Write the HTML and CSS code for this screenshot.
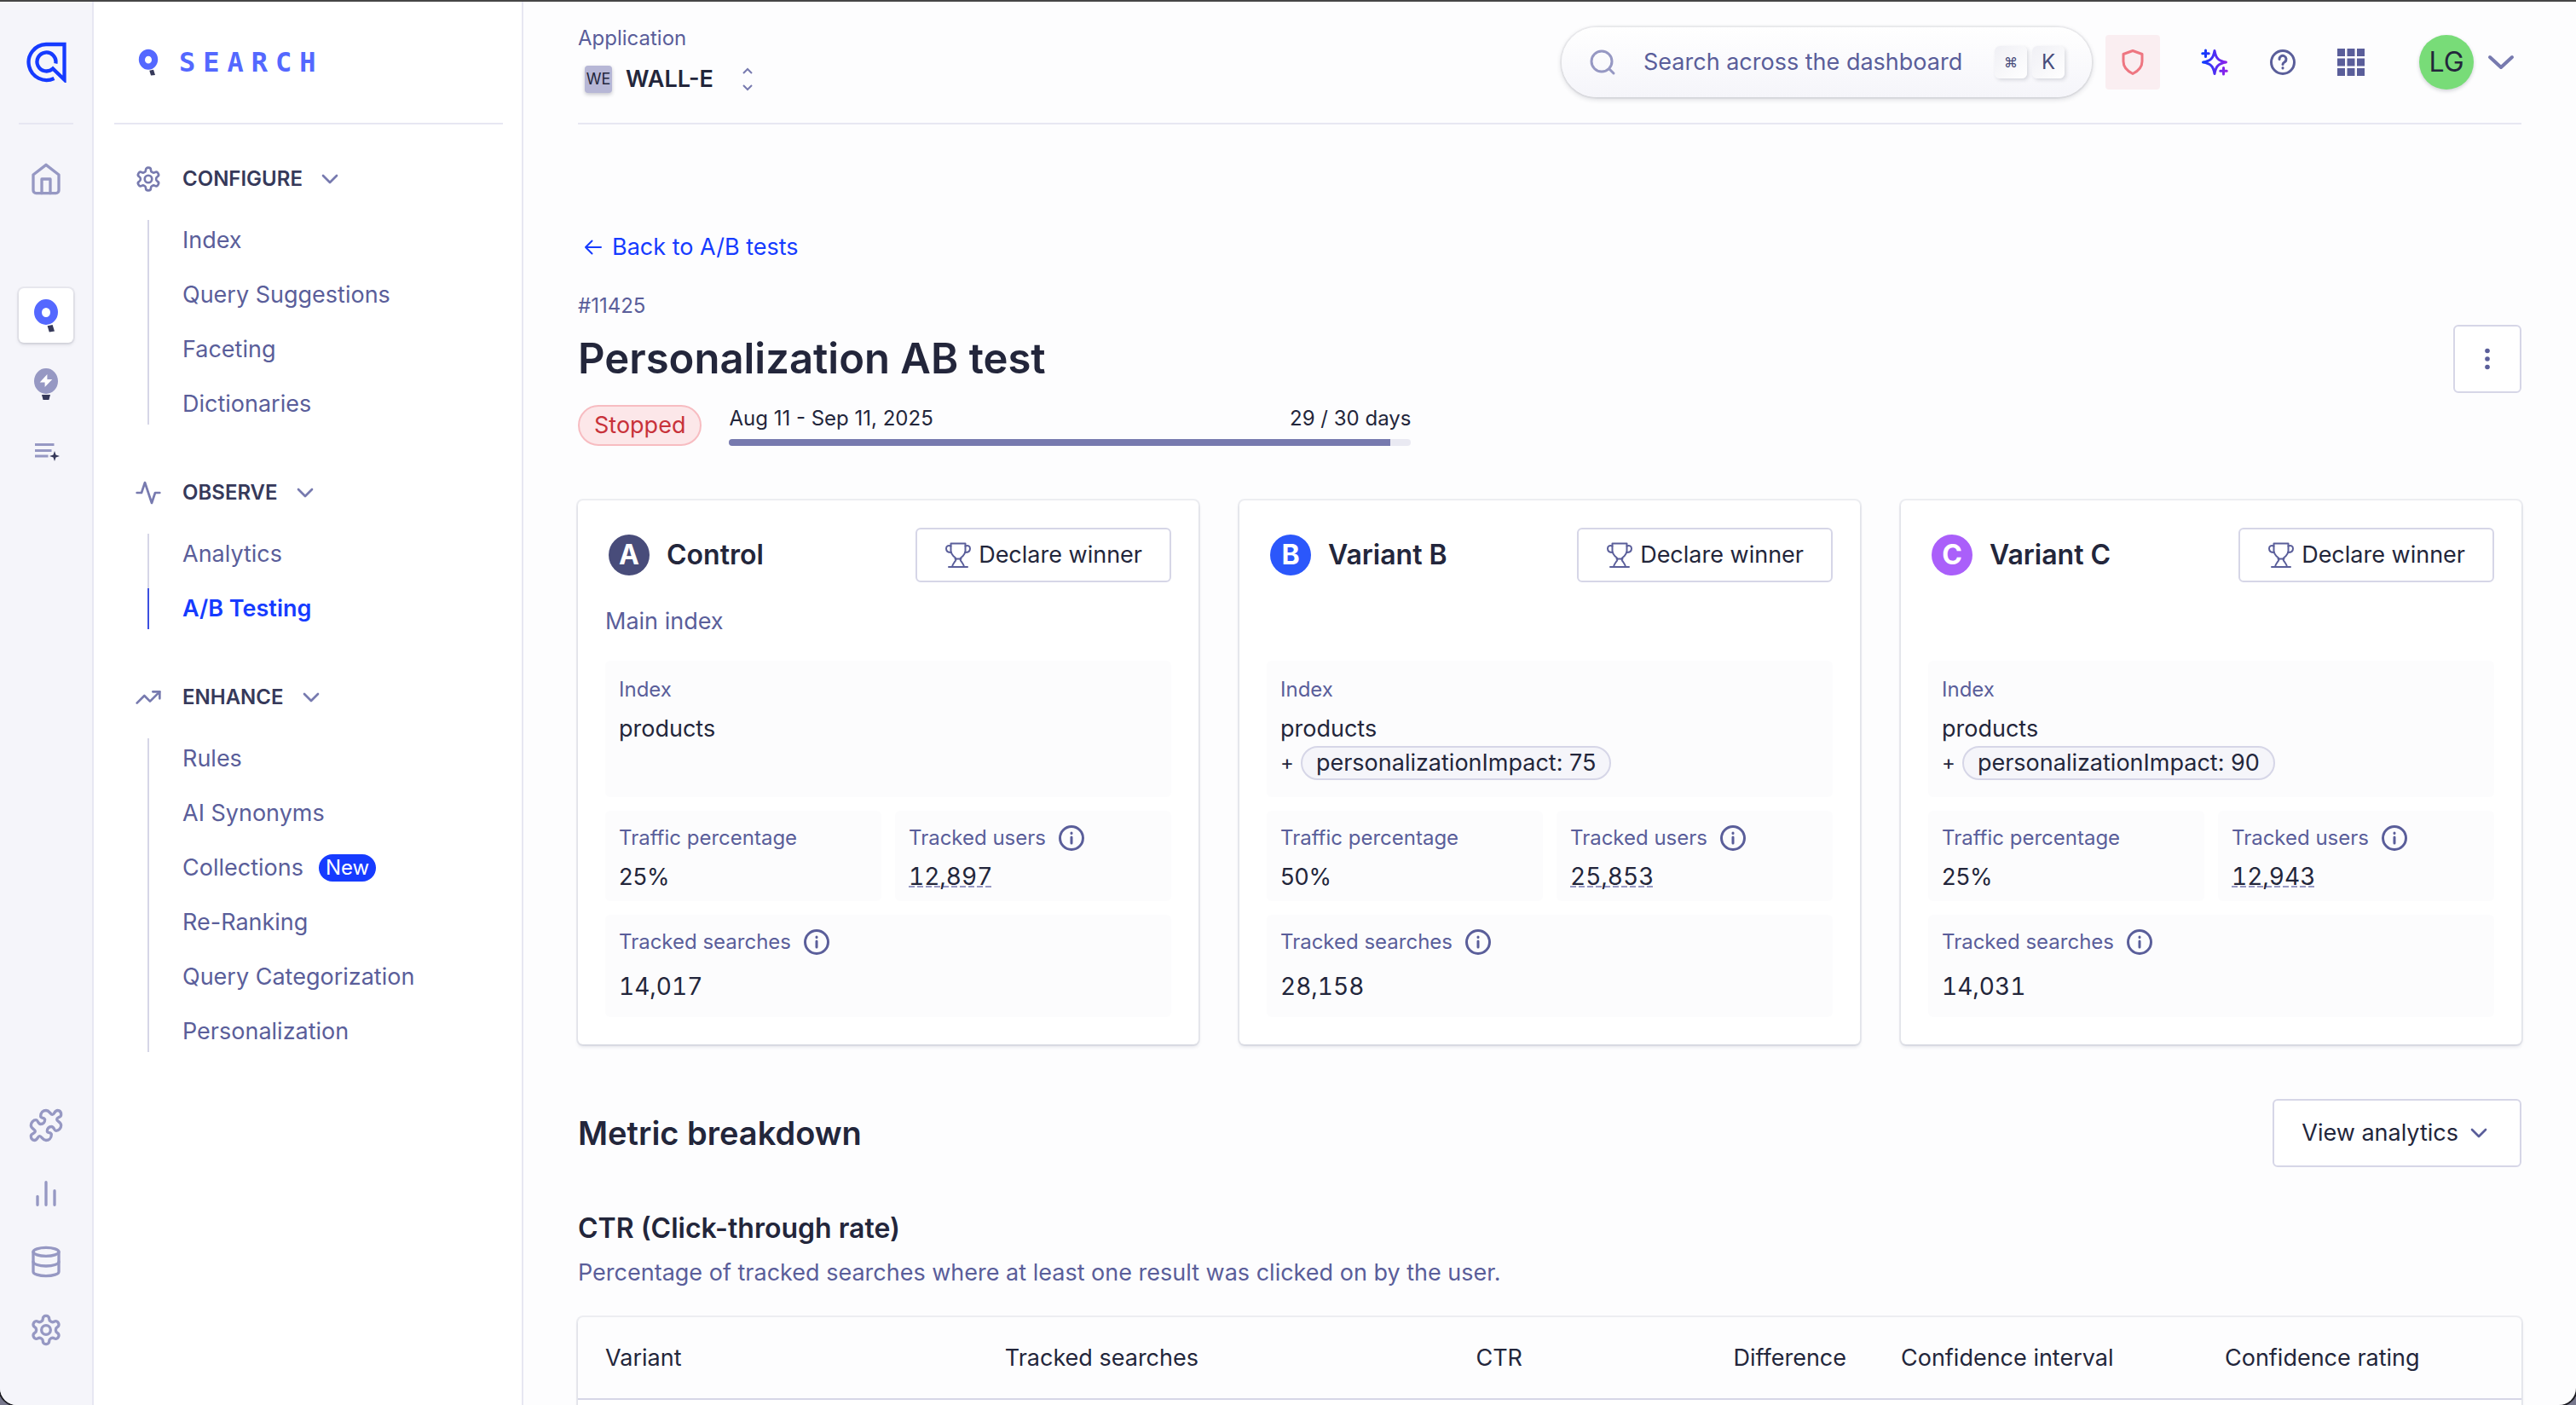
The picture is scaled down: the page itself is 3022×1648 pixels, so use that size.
FILE: index.html
```html
<!DOCTYPE html>
<html lang="en">
<head>
  <meta charset="UTF-8" />
  <meta name="viewport" content="width=device-width, initial-scale=1.0"/>
  <title>Personalization AB test</title>
  <link rel="stylesheet" href="styles.css">
</head>
<body>

<!-- Icons -->
<svg class="sprite" aria-hidden="true">
  <defs>
    <linearGradient id="spark" x1="0" y1="0" x2="32" y2="0" gradientUnits="userSpaceOnUse">
      <stop offset="0" stop-color="#003dff"/>
      <stop offset="1" stop-color="#9a1fe8"/>
    </linearGradient>
  </defs>
  <symbol id="i-gear" viewBox="0 0 24 24">
    <path d="M12.22 2h-.44a2 2 0 0 0-2 2v.18a2 2 0 0 1-1 1.73l-.43.25a2 2 0 0 1-2 0l-.15-.08a2 2 0 0 0-2.73.73l-.22.38a2 2 0 0 0 .73 2.73l.15.1a2 2 0 0 1 1 1.72v.51a2 2 0 0 1-1 1.74l-.15.09a2 2 0 0 0-.73 2.73l.22.38a2 2 0 0 0 2.73.73l.15-.08a2 2 0 0 1 2 0l.43.25a2 2 0 0 1 1 1.73V20a2 2 0 0 0 2 2h.44a2 2 0 0 0 2-2v-.18a2 2 0 0 1 1-1.73l.43-.25a2 2 0 0 1 2 0l.15.08a2 2 0 0 0 2.73-.73l.22-.39a2 2 0 0 0-.73-2.73l-.15-.08a2 2 0 0 1-1-1.74v-.5a2 2 0 0 1 1-1.74l.15-.09a2 2 0 0 0 .73-2.73l-.22-.38a2 2 0 0 0-2.73-.73l-.15.08a2 2 0 0 1-2 0l-.43-.25a2 2 0 0 1-1-1.73V4a2 2 0 0 0-2-2z"/>
    <circle cx="12" cy="12" r="3.2"/>
  </symbol>
  <symbol id="i-home" viewBox="0 0 24 24">
    <path d="M3 9l9-7 9 7v11a2 2 0 0 1-2 2H5a2 2 0 0 1-2-2z"/>
    <path d="M9 22V12h6v10"/>
  </symbol>
  <symbol id="i-puzzle" viewBox="0 0 24 24">
    <path d="M8.2 5.6C8.2 3 10 1.5 12 1.5C14.5 1.5 15 4.4 16.5 4.4C18 4.4 17.8 1.5 20.2 1.5C22 1.5 22.6 3 22.6 4.6C22.6 6.5 19.6 6.2 19.6 7.8C19.6 9.4 22.6 9.6 22.6 12C22.6 14 21 15.8 19 15.8C17.6 15.8 17.8 12.9 15.8 12.9C14 12.9 12.8 14.2 12.8 16C12.8 17.6 15.8 16.8 15.8 18.4C15.8 21 14 22.5 12 22.5C9.5 22.5 9 19.6 7.5 19.6C6 19.6 6.2 22.5 3.8 22.5C2 22.5 1.4 21 1.4 19.4C1.4 17.5 4.4 17.8 4.4 16.2C4.4 14.6 1.4 14.4 1.4 12C1.4 10 3 8.2 5 8.2C6.4 8.2 6.2 11.1 8.2 11.1C10 11.1 11.2 9.8 11.2 8C11.2 6.4 8.2 7.2 8.2 5.6Z"/>
  </symbol>
  <symbol id="i-bars" viewBox="0 0 24 24">
    <path d="M6 14v6M12 4v16M18 10v10"/>
  </symbol>
  <symbol id="i-database" viewBox="0 0 24 24">
    <ellipse cx="12" cy="5" rx="9" ry="3"/>
    <path d="M21 12c0 1.66-4 3-9 3s-9-1.34-9-3"/>
    <path d="M3 5v14c0 1.66 4 3 9 3s9-1.34 9-3V5"/>
  </symbol>
  <symbol id="i-activity" viewBox="0 0 24 24">
    <path d="M22 12h-4l-3 9L9 3l-3 9H2"/>
  </symbol>
  <symbol id="i-trend" viewBox="0 0 24 24">
    <path d="M22 7l-8.5 8.5-5-5L2 17"/>
    <path d="M16 7h6v6"/>
  </symbol>
  <symbol id="i-chevron" viewBox="0 0 24 24">
    <path d="M6 9l6 6 6-6"/>
  </symbol>
  <symbol id="i-query" viewBox="0 0 40 40">
    <path fill="#5468ff" fill-rule="evenodd" d="M20 1a14 15 0 1 1 0 30a14 15 0 1 1 0-30zM20 11a5 5.500 0 1 0 0 11a5 5.500 0 1 0 0-11z"/>
    <path fill="#36395a" d="M21.600 32.200L27.600 31l2.400 7.600-6.200.9z"/>
  </symbol>
  <symbol id="i-trophy" viewBox="0 0 32 32">
    <path d="M7.500 2.500h17v8.500c0 4-2.500 6-5 8-1.500 1.200-1 2.500-.5 3.500 1.500 2.500 3.500 4 4 7.500M7.500 2.500v8.500c0 4 2.500 6 5 8 1.500 1.200 1 2.500.5 3.500-1.500 2.500-3.500 4-4 7.500M5 30h22M12.500 20.500h7"/>
    <path d="M7.500 5.500C4.500 4.300 2 5.500 2 8.500S4.500 13 8 13M24.500 5.500c3-1.200 5.500 0 5.500 3S27.500 13 24 13"/>
  </symbol>
  <symbol id="i-info" viewBox="0 0 32 32">
    <circle cx="16" cy="16" r="13.500"/>
    <path d="M16 15v7M16 10v.5"/>
  </symbol>
</svg>

<div class="app">

  <nav class="rail" aria-label="Products">
    <a class="rail-logo" href="#" aria-label="Home page">
      <svg viewBox="0 0 48 48" width="48" height="48"><path d="M33.500 43A21 21 0 1 1 24 3H45.500V44.500L32 31.500A11 11 0 1 1 35.300 25.500" fill="none" stroke="#163bff" stroke-width="4.300"/></svg>
    </a>
    <a class="rail-item rail-home" href="#" aria-label="Overview"><svg class="icon lg"><use href="#i-home"/></svg></a>
    <a class="rail-item active" href="#" aria-label="Search"><svg class="icon lg glyph"><use href="#i-query"/></svg></a>
    <a class="rail-item" href="#" aria-label="Recommend">
      <svg class="icon lg glyph" viewBox="0 0 40 40">
        <ellipse cx="20" cy="17" rx="14" ry="15" fill="#9698c3"/>
        <path fill="#fff" d="M21.400 9L12.700 18.500h5.900v5.500l8.700-9h-5.900z"/>
        <path fill="#36395a" d="M15 33h10l-1.600 6h-6.800z"/>
      </svg>
    </a>
    <a class="rail-item" href="#" aria-label="Collections">
      <svg class="icon lg glyph" viewBox="0 0 40 40">
        <path stroke="#9698c3" stroke-width="3.200" d="M7 11.500h22.500M7 18.500h19.500M7 25h15.500"/>
        <path fill="#36395a" d="M30 19l1.500 4.500L36 25l-4.500 1.500L30 31l-1.500-4.500L24 25l4.500-1.500z"/>
      </svg>
    </a>
    <div class="rail-bottom">
      <a class="rail-item" href="#" aria-label="Integrations"><svg class="icon lg"><use href="#i-puzzle"/></svg></a>
      <a class="rail-item" href="#" aria-label="Usage"><svg class="icon lg"><use href="#i-bars"/></svg></a>
      <a class="rail-item" href="#" aria-label="Data sources"><svg class="icon lg"><use href="#i-database"/></svg></a>
      <a class="rail-item" href="#" aria-label="Settings"><svg class="icon lg"><use href="#i-gear"/></svg></a>
    </div>
  </nav>

  <aside class="sidebar">
    <div class="brand">
      <svg class="icon glyph"><use href="#i-query"/></svg>
      <span>SEARCH</span>
    </div>

    <section class="menu">
      <button class="menu-title">
        <svg class="icon"><use href="#i-gear"/></svg><span>CONFIGURE</span><svg class="icon caret"><use href="#i-chevron"/></svg>
      </button>
      <ul>
        <li><a href="#">Index</a></li>
        <li><a href="#">Query Suggestions</a></li>
        <li><a href="#">Faceting</a></li>
        <li><a href="#">Dictionaries</a></li>
      </ul>
    </section>

    <section class="menu">
      <button class="menu-title">
        <svg class="icon"><use href="#i-activity"/></svg><span>OBSERVE</span><svg class="icon caret"><use href="#i-chevron"/></svg>
      </button>
      <ul>
        <li><a href="#">Analytics</a></li>
        <li class="current"><a href="#">A/B Testing</a></li>
      </ul>
    </section>

    <section class="menu">
      <button class="menu-title">
        <svg class="icon"><use href="#i-trend"/></svg><span>ENHANCE</span><svg class="icon caret"><use href="#i-chevron"/></svg>
      </button>
      <ul>
        <li><a href="#">Rules</a></li>
        <li><a href="#">AI Synonyms</a></li>
        <li><a href="#">Collections</a><span class="new">New</span></li>
        <li><a href="#">Re-Ranking</a></li>
        <li><a href="#">Query Categorization</a></li>
        <li><a href="#">Personalization</a></li>
      </ul>
    </section>
  </aside>

  <div class="main">
    <header class="topbar">
      <div class="application">
        <span class="small muted">Application</span>
        <button class="app-picker">
          <span class="app-badge">WE</span>
          <span class="app-name">WALL-E</span>
          <svg class="updown" viewBox="0 0 16 32"><path d="M3 9l5-5 5 5M3 23l5 5 5-5"/></svg>
        </button>
      </div>

      <label class="search">
        <svg class="icon" viewBox="0 0 32 32"><circle cx="15" cy="15" r="12"/><path d="M24 24l5 5"/></svg>
        <input type="text" placeholder="Search across the dashboard" aria-label="Search across the dashboard">
        <span class="keys"><kbd class="cmd">⌘</kbd><kbd>K</kbd></span>
      </label>

      <div class="tools">
        <button class="tool shield" aria-label="Status">
          <svg class="icon" viewBox="0 0 32 32"><path d="M16 2.500L27 6.500V15c0 7-5 11.500-11 14.500C10 26.500 5 22 5 15V6.500z"/></svg>
        </button>
        <button class="tool" aria-label="What's new">
          <svg class="icon sparkle" viewBox="0 0 32 32">
            <path d="M16 2.500C17.500 11.500 20.500 14.500 29.500 16C20.500 17.500 17.500 20.500 16 29.500C14.500 20.500 11.500 17.500 2.500 16C11.500 14.500 14.500 11.500 16 2.500Z"/>
            <path d="M5.500 2v7.500M1.750 5.750h7.500M26.500 22.500v7.500M22.750 26.250h7.500"/>
          </svg>
        </button>
        <button class="tool" aria-label="Help">
          <svg class="icon" viewBox="0 0 32 32"><circle cx="16" cy="16" r="13.500"/><path d="M12 12.500a4 4 0 1 1 6.500 3C17 16.500 16 17 16 18.500M16 22.500v.4"/></svg>
        </button>
        <button class="tool" aria-label="Apps">
          <svg class="icon grid" viewBox="0 0 32 32"><path d="M0 0h9v9H0zM11.500 0h9v9h-9zM23 0h9v9h-9zM0 11.500h9v9H0zM11.500 11.500h9v9h-9zM23 11.500h9v9h-9zM0 23h9v9H0zM11.500 23h9v9h-9zM23 23h9v9h-9z"/></svg>
        </button>
        <button class="account">
          <span class="avatar">LG</span>
          <svg class="icon" viewBox="0 0 32 32"><path d="M3 10l13 12 13-12"/></svg>
        </button>
      </div>
    </header>

    <main>
      <a class="back" href="#">
        <svg class="arrow" viewBox="0 0 24 24"><path d="M21 12H3M10.500 4.500L3 12l7.500 7.500"/></svg>Back to A/B tests
      </a>

      <div class="page-head">
        <div class="page-title">
          <p class="small muted">#11425</p>
          <h1>Personalization AB test</h1>
        </div>
        <button class="btn more" aria-label="More actions">
          <svg class="icon" viewBox="0 0 32 32"><circle cx="16" cy="6.500" r="2.800"/><circle cx="16" cy="16" r="2.800"/><circle cx="16" cy="25.500" r="2.800"/></svg>
        </button>
      </div>

      <div class="status">
        <span class="stopped">Stopped</span>
        <div class="duration">
          <div class="duration-text small"><span>Aug 11 - Sep 11, 2025</span><span>29 / 30 days</span></div>
          <div class="bar"><div class="bar-fill" style="width: 97%"></div></div>
        </div>
      </div>

      <div class="cards">
        <article class="card">
          <div class="card-head">
            <span class="letter a">A</span>
            <h2>Control</h2>
            <button class="btn declare"><svg class="icon"><use href="#i-trophy"/></svg>Declare winner</button>
          </div>
          <p class="description">Main index</p>
          <dl class="facts">
            <div class="fact index"><dt>Index</dt><dd>products</dd></div>
            <div class="fact"><dt>Traffic percentage</dt><dd>25%</dd></div>
            <div class="fact"><dt>Tracked users <svg class="icon"><use href="#i-info"/></svg></dt><dd><span class="dashed">12,897</span></dd></div>
            <div class="fact searches"><dt>Tracked searches <svg class="icon"><use href="#i-info"/></svg></dt><dd>14,017</dd></div>
          </dl>
        </article>

        <article class="card">
          <div class="card-head">
            <span class="letter b">B</span>
            <h2>Variant B</h2>
            <button class="btn declare"><svg class="icon"><use href="#i-trophy"/></svg>Declare winner</button>
          </div>
          <p class="description"></p>
          <dl class="facts">
            <div class="fact index"><dt>Index</dt><dd>products</dd><dd class="param"><span class="plus">+</span><span class="pill">personalizationImpact: 75</span></dd></div>
            <div class="fact"><dt>Traffic percentage</dt><dd>50%</dd></div>
            <div class="fact"><dt>Tracked users <svg class="icon"><use href="#i-info"/></svg></dt><dd><span class="dashed">25,853</span></dd></div>
            <div class="fact searches"><dt>Tracked searches <svg class="icon"><use href="#i-info"/></svg></dt><dd>28,158</dd></div>
          </dl>
        </article>

        <article class="card">
          <div class="card-head">
            <span class="letter c">C</span>
            <h2>Variant C</h2>
            <button class="btn declare"><svg class="icon"><use href="#i-trophy"/></svg>Declare winner</button>
          </div>
          <p class="description"></p>
          <dl class="facts">
            <div class="fact index"><dt>Index</dt><dd>products</dd><dd class="param"><span class="plus">+</span><span class="pill">personalizationImpact: 90</span></dd></div>
            <div class="fact"><dt>Traffic percentage</dt><dd>25%</dd></div>
            <div class="fact"><dt>Tracked users <svg class="icon"><use href="#i-info"/></svg></dt><dd><span class="dashed">12,943</span></dd></div>
            <div class="fact searches"><dt>Tracked searches <svg class="icon"><use href="#i-info"/></svg></dt><dd>14,031</dd></div>
          </dl>
        </article>
      </div>

      <div class="breakdown-head">
        <h2>Metric breakdown</h2>
        <button class="btn view">View analytics<svg class="icon"><use href="#i-chevron"/></svg></button>
      </div>

      <h3>CTR (Click-through rate)</h3>
      <p class="muted metric-text">Percentage of tracked searches where at least one result was clicked on by the user.</p>

      <div class="table-wrap">
        <table>
          <thead>
            <tr>
              <th>Variant</th>
              <th class="num">Tracked searches</th>
              <th class="num">CTR</th>
              <th class="num">Difference</th>
              <th>Confidence interval</th>
              <th>Confidence rating</th>
            </tr>
          </thead>
          <tbody>
            <tr><td></td><td></td><td></td><td></td><td></td><td></td></tr>
          </tbody>
        </table>
      </div>
    </main>
  </div>
</div>

</body>
</html>
```

FILE: styles.css
```css
* {
  box-sizing: border-box;
}

html {
  background: #77778c;
}

body {
  margin: 0;
  font-family: Inter, "Liberation Sans", sans-serif;
  font-size: 27px;
  line-height: 40px;
  color: #23263b;
}

h1, h2, h3, p, ul, dl, dd {
  margin: 0;
  padding: 0;
}

button, input {
  font: inherit;
  color: inherit;
  background: none;
  border: none;
  padding: 0;
}

button {
  cursor: pointer;
}

a {
  color: inherit;
  text-decoration: none;
}

.sprite {
  position: absolute;
  width: 0;
  height: 0;
}

.icon {
  width: 32px;
  height: 32px;
  flex: none;
  fill: none;
  stroke: currentColor;
  stroke-width: 2;
  stroke-linecap: round;
  stroke-linejoin: round;
}

.icon.lg {
  width: 40px;
  height: 40px;
}

.icon.glyph {
  stroke: none;
  stroke-linecap: butt;
}

.muted {
  color: #5a5e9a;
}

.small {
  font-size: 24px;
  line-height: 32px;
}

.app {
  display: flex;
  height: 100vh;
  overflow: hidden;
  background: #fdfdfe;
  border-top: 2px solid #464646;
  border-radius: 0 0 20px 20px;
  box-shadow: 0 0 0 2px #1c1c22;
}

/* Left rail */
.rail {
  display: flex;
  flex-direction: column;
  align-items: center;
  gap: 16px;
  width: 110px;
  flex: none;
  background: #f5f5fa;
  border-right: 2px solid #e7e7f2;
  color: #9698c3;
  padding-bottom: 56px;
}

.rail-logo {
  display: flex;
  align-items: center;
  justify-content: center;
  width: 64px;
  height: 144px;
  border-bottom: 2px solid #e7e7f2;
}

.rail-item {
  display: flex;
  align-items: center;
  justify-content: center;
  width: 64px;
  height: 64px;
  border-radius: 6px;
}

.rail-home {
  margin-top: 16px;
  margin-bottom: 80px;
}

.rail-item.active {
  background: #fff;
  box-shadow: 0 0 0 2px rgba(35, 38, 59, 0.05), 0 2px 4px rgba(35, 38, 59, 0.15);
}

.rail-bottom {
  display: flex;
  flex-direction: column;
  gap: 16px;
  margin-top: auto;
}

/* Sidebar */
.sidebar {
  width: 504px;
  flex: none;
  background: #fff;
  border-right: 2px solid #e7e7f2;
  padding: 0 22px 0 24px;
}

.brand {
  display: flex;
  align-items: center;
  gap: 20px;
  height: 144px;
  padding-left: 24px;
  border-bottom: 2px solid #e7e7f2;
  color: #5468ff;
  font-family: "DejaVu Sans Mono", monospace;
  font-weight: 700;
  font-size: 32px;
  letter-spacing: 9px;
}

.menu {
  margin-top: 56px;
}

.brand + .menu {
  margin-top: 40px;
}

.menu-title {
  display: flex;
  align-items: center;
  height: 48px;
  margin-left: 24px;
  color: #777aaf;
}

.menu-title span {
  margin: 0 16px 0 24px;
  font-size: 24px;
  font-weight: 600;
  color: #36395a;
}

.menu ul {
  list-style: none;
  margin: 24px 0 0 39px;
  display: flex;
  flex-direction: column;
  border-left: 2px solid #d6d6e7;
}

.menu li {
  display: flex;
  align-items: center;
  gap: 18px;
  height: 64px;
  color: #5a5e9a;
  padding-left: 41px;
  margin-left: -2px;
}

.menu li:first-child,
.menu li:last-child {
  height: 56px;
}

.menu li:first-child {
  padding-bottom: 8px;
}

.menu li:last-child {
  padding-top: 8px;
}

.menu .current {
  color: #163bff;
  font-weight: 600;
}

.menu li.current:last-child {
  height: 48px;
  margin-top: 8px;
  padding-top: 0;
  padding-left: 39px;
  border-left: 2px solid #3c4fe0;
}

.new {
  background: #163bff;
  color: #fff;
  font-size: 24px;
  line-height: 32px;
  border-radius: 16px;
  padding: 0 8px;
}

/* Top bar */
.main {
  flex: 1;
  min-width: 0;
  padding: 0 64px;
  overflow: hidden;
}

.topbar {
  display: flex;
  align-items: center;
  height: 144px;
  border-bottom: 2px solid #e7e7f2;
}

.application {
  margin-right: auto;
  padding-bottom: 4px;
  display: flex;
  flex-direction: column;
  gap: 12px;
}

.app-picker {
  display: flex;
  align-items: center;
  gap: 16px;
  padding-left: 8px;
}

.app-badge {
  width: 32px;
  height: 32px;
  border-radius: 4px;
  background: #b7b7d6;
  font-size: 18px;
  line-height: 32px;
  text-align: center;
  box-shadow: 0 2px 4px rgba(35, 38, 59, 0.25);
}

.app-name {
  font-weight: 600;
}

.updown {
  width: 16px;
  height: 32px;
  margin-left: 16px;
  fill: none;
  stroke: #777aaf;
  stroke-width: 2;
}

.search {
  display: flex;
  align-items: center;
  gap: 32px;
  width: 622px;
  height: 82px;
  margin-right: 16px;
  padding: 0 32px;
  border-radius: 41px;
  background: linear-gradient(#fff, #f5f5fa);
  box-shadow: 0 0 0 2px rgba(35, 38, 59, 0.05), 0 2px 6px rgba(35, 38, 59, 0.2);
  color: #9698c3;
}

.search .icon {
  stroke-width: 3;
}

.search input {
  flex: 1;
  min-width: 0;
  outline: none;
  color: #5a5e9a;
}

.search input::placeholder {
  color: #5a5e9a;
  opacity: 1;
}

.keys {
  display: flex;
  gap: 6px;
}

kbd {
  width: 38px;
  height: 38px;
  border-radius: 6px;
  background: linear-gradient(135deg, #f0f0f5, #fff);
  box-shadow: 2px 2px 4px rgba(35, 38, 59, 0.15);
  color: #484c7a;
  font-family: inherit;
  font-size: 24px;
  line-height: 38px;
  text-align: center;
}

kbd.cmd {
  font-family: Inter, "DejaVu Sans", sans-serif;
  font-size: 16px;
}

.tools {
  display: flex;
  align-items: center;
  color: #5a5e9a;
}

.tool {
  display: flex;
  align-items: center;
  justify-content: center;
  width: 80px;
  height: 64px;
}

.tool .icon {
  stroke-width: 3;
}

.tool.shield {
  width: 64px;
  margin-right: 24px;
  border-radius: 4px;
  background: #faeef1;
  color: #ee7681;
}

.tool .sparkle {
  stroke: url(#spark);
}

.tool .grid {
  fill: #5a5e9a;
  stroke: none;
}

.account {
  display: flex;
  align-items: center;
  gap: 16px;
  margin-left: 40px;
  padding-right: 8px;
  color: #777aaf;
}

.account .icon {
  stroke-width: 4;
}

.avatar {
  width: 64px;
  height: 64px;
  border-radius: 50%;
  background: #78dc78;
  color: #23263b;
  font-size: 32px;
  line-height: 64px;
  text-align: center;
  box-shadow: 0 2px 4px rgba(35, 38, 59, 0.2);
}

/* Page header */
.back {
  display: inline-flex;
  align-items: center;
  gap: 10px;
  margin-top: 124px;
  padding-left: 6px;
  color: #163bff;
}

.arrow {
  width: 24px;
  height: 24px;
  fill: none;
  stroke: currentColor;
  stroke-width: 2;
  stroke-linecap: round;
  stroke-linejoin: round;
}

.page-head {
  display: flex;
  align-items: flex-end;
  justify-content: space-between;
  margin-top: 30px;
}

.page-title {
  padding-bottom: 8px;
}

h1 {
  margin-top: 14px;
  font-size: 49px;
  line-height: 64px;
  font-weight: 600;
}

.btn {
  display: flex;
  align-items: center;
  justify-content: center;
  gap: 8px;
  background: #fff;
  border: 2px solid #d6d6e7;
  border-radius: 6px;
}

.btn .icon {
  color: #5a5e9a;
}

.more {
  width: 80px;
  height: 80px;
}

.more .icon {
  fill: currentColor;
  stroke: none;
}

.status {
  display: flex;
  gap: 32px;
  margin-top: 14px;
}

.stopped {
  padding: 0 17px;
  border: 2px solid #f7bcc1;
  border-radius: 24px;
  background: #fce7e9;
  color: #c8323a;
  line-height: 44px;
}

.duration {
  display: flex;
  flex-direction: column;
  gap: 8px;
  width: 800px;
}

.duration-text {
  display: flex;
  justify-content: space-between;
}

.bar {
  height: 8px;
  border-radius: 4px;
  background: #e9e9f2;
  overflow: hidden;
}

.bar-fill {
  height: 100%;
  background: #777aaf;
}

/* Variant cards */
.cards {
  display: grid;
  grid-template-columns: repeat(3, 1fr);
  gap: 48px;
  margin-top: 64px;
}

.card {
  padding: 32px;
  border-radius: 6px;
  background: #fff;
  box-shadow: 0 0 0 2px rgba(35, 38, 80, 0.07), 0 3px 4px rgba(35, 38, 80, 0.12);
}

.card-head {
  display: flex;
  align-items: center;
  gap: 20px;
  padding-left: 4px;
}

.card-head h2 {
  font-size: 32px;
  font-weight: 600;
}

.letter {
  width: 48px;
  height: 48px;
  border-radius: 50%;
  color: #fff;
  font-size: 32px;
  font-weight: 700;
  line-height: 48px;
  text-align: center;
}

.letter.a {
  background: #484c7a;
}

.letter.b {
  background: #2b57fb;
}

.letter.c {
  background: #aa5ffa;
}

.declare {
  height: 64px;
  margin-left: auto;
  padding: 0 32px;
}

.description {
  height: 44px;
  margin: 24px 0;
  line-height: 44px;
  color: #5a5e9a;
}

.facts {
  display: grid;
  grid-template-columns: 1fr 1fr;
  gap: 16px;
}

.fact {
  padding: 16px 16px 8px;
  border-radius: 6px;
  background: #fcfcfd;
}

.fact dt {
  display: flex;
  align-items: center;
  gap: 14px;
  margin-bottom: 10px;
  font-size: 24px;
  line-height: 32px;
  color: #5a5e9a;
}

.fact dt .icon {
  stroke-width: 3;
}

.index,
.searches {
  grid-column: span 2;
}

.index {
  min-height: 160px;
  padding-top: 18px;
}

.searches {
  padding-bottom: 16px;
}

.searches dt {
  margin-bottom: 16px;
}

.searches dd,
.dashed {
  font-size: 28px;
  font-variant-numeric: tabular-nums;
}

.dashed {
  display: inline-block;
  line-height: 26px;
  background: repeating-linear-gradient(90deg, #9698c3 0 7px, transparent 7px 10px) 0 100% / 100% 2px no-repeat;
}

.param {
  display: flex;
  align-items: center;
  gap: 8px;
}

.plus {
  font-size: 24px;
}

.pill {
  padding: 0 16px;
  border: 2px solid #d6d6e7;
  border-radius: 20px;
  background: #f5f5fa;
  line-height: 36px;
}

/* Metrics */
.breakdown-head {
  display: flex;
  align-items: center;
  justify-content: space-between;
  margin-top: 64px;
}

.breakdown-head h2 {
  font-size: 38px;
  font-weight: 600;
}

.view {
  height: 80px;
  padding: 0 32px;
}

h3 {
  margin-top: 52px;
  font-size: 32px;
  font-weight: 600;
}

.metric-text {
  margin-top: 12px;
}

.table-wrap {
  margin-top: 32px;
  border-radius: 6px;
  box-shadow: 0 0 0 2px rgba(35, 38, 80, 0.07), 0 3px 4px rgba(35, 38, 80, 0.12);
}

table {
  width: 100%;
  border-collapse: collapse;
  table-layout: fixed;
}

th {
  height: 96px;
  padding: 0 32px;
  font-weight: 400;
  text-align: left;
  border-bottom: 2px solid #d6d6e7;
}

th.num {
  text-align: right;
}

td {
  height: 96px;
  background: #fff;
}
```
